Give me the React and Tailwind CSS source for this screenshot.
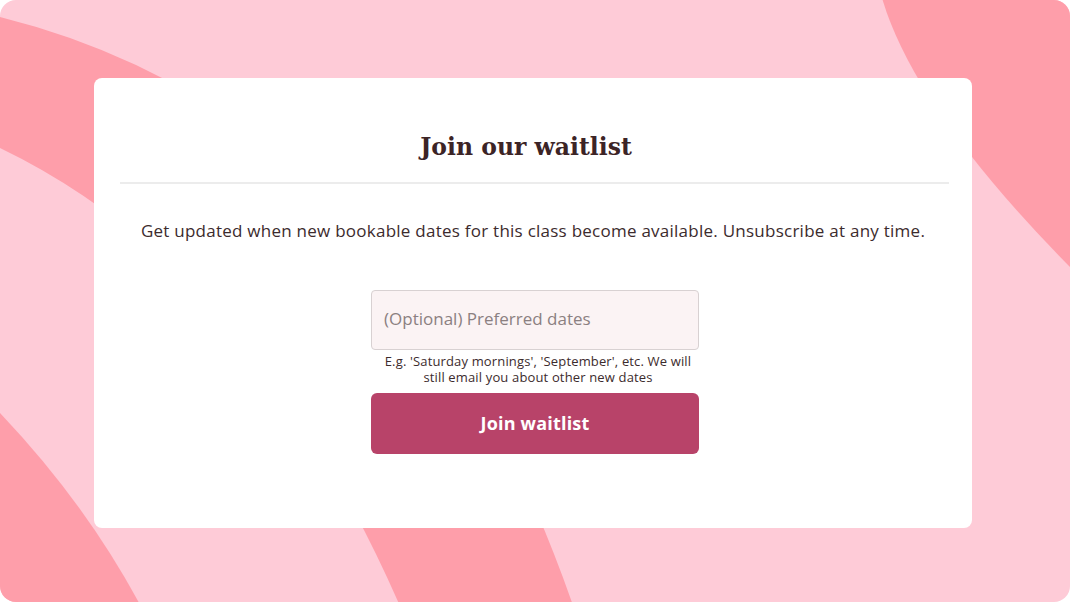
import React from 'react'

const sans = { fontFamily: '"Open Sans", "Liberation Sans", sans-serif' }

function Stripes() {
  return (
    <svg className="absolute inset-0 h-full w-full" viewBox="0 0 1070 602" preserveAspectRatio="none">
      <path d="M0 17 Q409 119 578 620 L406 620 Q258 272 0 148 Z" fill="#fe9eaa" />
      <path d="M0 413 Q92 510 148 620 L0 620 Z" fill="#fe9eaa" />
      <path d="M882 -2 Q915 110 1070 267 L1070 -2 Z" fill="#fe9eaa" />
    </svg>
  )
}

export default function App() {
  return (
    <div className="bg-white w-[1070px] h-[602px]">
      <div className="relative w-[1070px] h-[602px] rounded-[16px] overflow-hidden bg-[#fecbd7]">
        <Stripes />
        <div className="relative pl-[94px] pt-[78px]">
          <div className="w-[878px] h-[450px] bg-white rounded-[8px] flex flex-col">
            <h1
              className="text-center text-[23.5px] leading-[32px] font-bold text-[#3c2426] mt-[53px] pr-[14px]"
              style={{ fontFamily: '"DejaVu Serif", serif' }}
            >
              Join our waitlist
            </h1>
            <div className="ml-[26px] mr-[23px] mt-[19px] h-[2px] bg-[#ececec]" />
            <p className="text-center text-[17px] leading-[24px] tracking-[0.25px] text-[#3c2b2d] mt-[35px]" style={sans}>
              Get updated when new bookable dates for this class become available. Unsubscribe at any time.
            </p>
            <div className="ml-[277px] w-[328px] mt-[47px] flex flex-col" style={sans}>
              <input
                placeholder="(Optional) Preferred dates"
                className="h-[60px] w-full rounded-[4px] border-[1.5px] border-[#d8d1d2] bg-[#fbf3f4] pl-[12px] pb-[3px] text-[17px] text-[#3c2b2d] placeholder:text-[#8b8081] outline-none"
                style={sans}
              />
              <p className="mt-[3px] pl-[13px] pr-[7px] text-center text-[13px] leading-[16px] tracking-[0.15px] text-[#3c2b2d]">
                E.g. 'Saturday mornings', 'September', etc. We will still email you about other new dates
              </p>
              <button className="mt-[8px] h-[61px] w-full rounded-[6px] bg-[#b84369] text-white text-[18px] font-bold tracking-[0.2px]" style={sans}>
                Join waitlist
              </button>
            </div>
          </div>
        </div>
      </div>
    </div>
  )
}
